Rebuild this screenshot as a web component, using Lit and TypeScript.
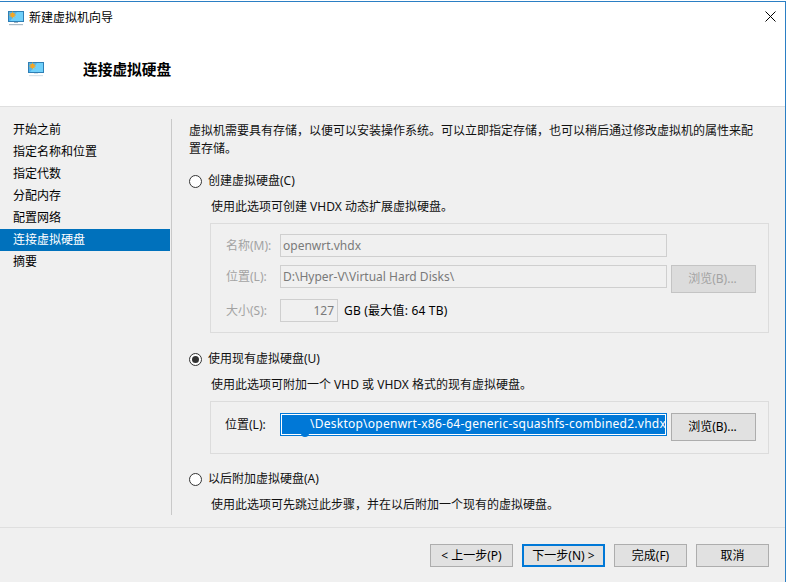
import { LitElement, html, css, svg } from "lit";
import { customElement } from "lit/decorators.js";

const monitor = (soft: boolean) => svg`
<svg class="mon" width="16" height="16" viewBox="0 0 16 16">
  <rect x="0.5" y="1.5" width="15" height="10" fill="#4db4f2" stroke="#2f7fb5"/>
  <path d="M9 2 L15 2 L15 11 L2 11 Z" fill="#6fd0fa"/>
  <circle cx="4.5" cy="5" r="2.2" fill="#f5a623"/>
  <path d="M4.5 1.5V8.5M1 5H8M2 2.5L7 7.5M7 2.5L2 7.5" stroke="#f5a623" stroke-width="0.8"/>
  <rect x="6" y="12" width="4" height="1" fill="${soft ? "#d5e2ea" : "#9fb4c2"}"/>
  <rect x="1" y="14" width="14" height="1.2" fill="${soft ? "#d5e2ea" : "#a9bac6"}"/>
</svg>`;

@customElement("app-root")
export class AppRoot extends LitElement {
  static styles = css`
    :host { display: block; width: 786px; height: 582px; overflow: hidden; background: #fff; padding-top: 1px; box-sizing: border-box; }
    * { box-sizing: border-box; }
    .win {
      width: 786px; height: 581px; display: flex; flex-direction: column;
      background: #f0f0f0; color: #111;
      font: 12px/18px "Noto Sans", "Noto Sans CJK SC", sans-serif;
      border-top: 1px solid #2b7fc4; border-right: 1px solid #2b7fc4;
    }
    .head { height: 105px; background: #fff; border-bottom: 1px solid #dfdfdf; flex: none; display: flex; flex-direction: column; }
    .title { height: 31px; display: flex; align-items: center; padding: 1px 5px 0 8px; gap: 5px; color: #000; }
    .title span { flex: 1; }
    .x { width: 11px; height: 11px; margin-right: 4px; margin-top: -3px; }
    .sub { display: flex; align-items: center; height: 46px; margin-top: 13px; padding: 0 0 0 28px; }
    .sub h1 { margin: 0 0 0 39px; font-size: 14.7px; font-weight: 700; color: #000; font-family: "Noto Sans CJK SC", sans-serif; }
    .body { flex: 1; display: flex; padding-top: 12px; }
    .nav { width: 172px; flex: none; height: 396px; border-right: 1px solid #c9c9c9; }
    .nav div { height: 22px; padding: 2px 0 2px 13px; width: 170px; line-height: 18px; color: #000; }
    .nav .on { background: #0071bc; color: #fff; }
    .main { flex: 1; padding: 3px 0 0 17px; }
    .main p { margin: 0; }
    .radio { display: flex; align-items: center; gap: 6px; height: 18px; margin-top: 14px; }
    .radio.r2 { margin-top: 17px; }
    .radio.r3 { margin-top: 16px; }
    .dot { width: 13px; height: 13px; border: 1px solid #333; border-radius: 50%; background: #fff; flex: none; display: flex; align-items: center; justify-content: center; }
    .dot i { width: 7px; height: 7px; border-radius: 50%; background: #333; }
    .desc { margin: 8px 0 0 22px !important; }
    .group { margin: 7px 0 0 21px; width: 559px; border: 1px solid #dcdcdc; padding: 10px 12px 10px 15px; display: flex; flex-direction: column; gap: 8px; }
    .group.g2 { padding: 11px 12px 12px 14px; }
    .g2 label { width: 55px; }
    .row { display: flex; align-items: flex-start; height: 23px; }
    .row.tall { height: 26px; }
    .row.full { height: 28px; }
    .row label { flex: 0 0 54px; line-height: 23px; }
    .row.full label { flex-basis: 55px; }
    .off label { color: #a3a3a3; }
    .input { height: 23px; width: 387px; border: 1px solid #bcbcbc; padding: 0 2px; line-height: 21px; white-space: nowrap; overflow: hidden; background: #fff; }
    .off .input { background: #f0f0f0; border-color: #cfcfcf; color: #7a7a7a; }
    .off .size { width: 58px; text-align: right; padding-right: 3px; }
    .unit { margin-left: 6px; line-height: 23px; color: #000; letter-spacing: 0.2px; }
    .btn { height: 23px; display: flex; align-items: center; justify-content: center; background: #e1e1e1; border: 1px solid #adadad; color: #000; flex: none; }
    .browse { width: 85px; height: 28px; margin-left: 4px; padding-right: 2px; }
    .off .browse { color: #a3a3a3; background: #dcdcdc; border-color: #c4c4c4; }
    .active { border: 1px solid #0078d7; padding: 1px; background: #fff; width: 387px; height: 23px; flex: none; }
    .sel { display: block; height: 19px; line-height: 18px; background: #0078d7; color: #fff; white-space: nowrap; overflow: hidden; letter-spacing: 0.25px; }
    .blob { display: inline-block; width: 28px; }
    .bump { position: absolute; left: 21px; top: 20px; width: 8px; height: 4px; border-radius: 0 0 4px 4px; background: #0078d7; }
    .wrap { position: relative; flex: none; }
    .foot { height: 55px; flex: none; border-top: 1px solid #dfdfdf; display: flex; justify-content: flex-end; align-items: flex-start; padding: 16px 16px 0 0; }
    .foot .btn { margin-left: 9px; }
    .primary { border: 2px solid #0078d7; }
    .w83 { width: 83px; }
    .w73 { width: 73px; }
  `;

  render() {
    const nav = ["开始之前", "指定名称和位置", "指定代数", "分配内存", "配置网络", "连接虚拟硬盘", "摘要"];
    return html`<div class="win">
      <div class="head">
        <div class="title">${monitor(false)}<span>新建虚拟机向导</span>
          <svg class="x" viewBox="0 0 11 11"><path d="M.5.5l10 10M10.5.5l-10 10" stroke="#000" fill="none"/></svg>
        </div>
        <div class="sub">${monitor(true)}<h1>连接虚拟硬盘</h1></div>
      </div>
      <div class="body">
        <div class="nav">${nav.map((n, i) => html`<div class=${i === 5 ? "on" : ""}>${n}</div>`)}</div>
        <div class="main">
          <p>虚拟机需要具有存储，以便可以安装操作系统。可以立即指定存储，也可以稍后通过修改虚拟机的属性来配<br />置存储。</p>
          <div class="radio"><span class="dot"></span>创建虚拟硬盘(C)</div>
          <p class="desc">使用此选项可创建 VHDX 动态扩展虚拟硬盘。</p>
          <div class="group off">
            <div class="row"><label>名称(M):</label><div class="input">openwrt.vhdx</div></div>
            <div class="row tall"><label>位置(L):</label><div class="input">D:\\Hyper-V\\Virtual Hard Disks\\</div><div class="btn browse">浏览(B)...</div></div>
            <div class="row"><label>大小(S):</label><div class="input size">127</div><span class="unit">GB (最大值: 64 TB)</span></div>
          </div>
          <div class="radio r2"><span class="dot"><i></i></span>使用现有虚拟硬盘(U)</div>
          <p class="desc">使用此选项可附加一个 VHD 或 VHDX 格式的现有虚拟硬盘。</p>
          <div class="group g2">
            <div class="row full"><label>位置(L):</label>
              <div class="wrap"><div class="active"><span class="sel"><span class="blob"></span>\\Desktop\\openwrt-x86-64-generic-squashfs-combined2.vhdx</span></div><span class="bump"></span></div>
              <div class="btn browse">浏览(B)...</div></div>
          </div>
          <div class="radio r3"><span class="dot"></span>以后附加虚拟硬盘(A)</div>
          <p class="desc">使用此选项可先跳过此步骤，并在以后附加一个现有的虚拟硬盘。</p>
        </div>
      </div>
      <div class="foot">
        <div class="btn w83">&lt; 上一步(P)</div>
        <div class="btn primary w83">下一步(N) &gt;</div>
        <div class="btn w73">完成(F)</div>
        <div class="btn w73">取消</div>
      </div>
    </div>`;
  }
}
